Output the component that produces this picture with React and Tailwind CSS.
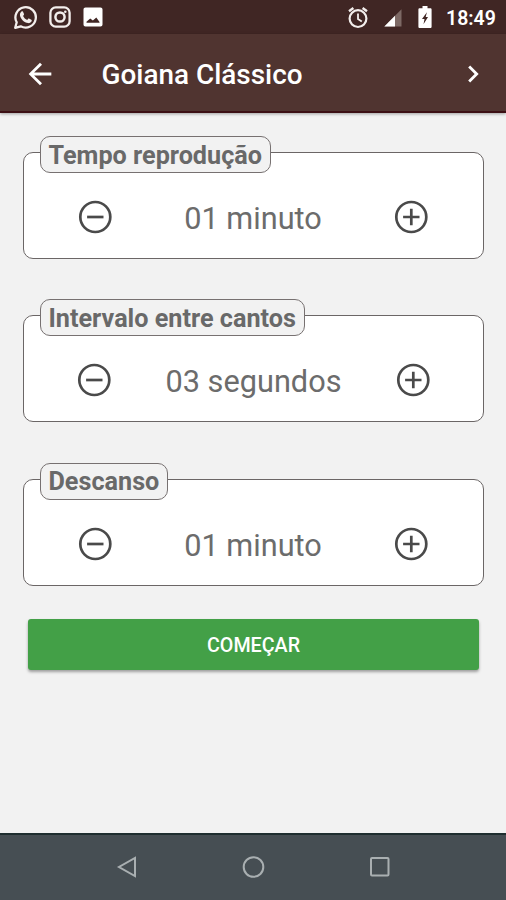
import React from "react";
import { MdArrowBack, MdChevronRight } from "react-icons/md";

function WhatsappGlyph() {
  return (
    <svg width="25" height="25" viewBox="0 0 25 25" fill="none" className="shrink-0">
      <path
        d="M2.200 22.800L3.700 17.300A10.200 10.200 0 1 1 7.700 21.300z"
        stroke="#f3eeec"
        strokeWidth="2.300"
        strokeLinejoin="round"
      />
      <path
        d="M8.300 6.700c.5-.5 1.400-.5 1.700.1l1 2.300c.2.500-.1.900-.9 1.800.9 1.900 2.200 3.100 4.200 4 .8-1 1.200-1.500 1.700-1.300l2.300 1.100c.6.300.6.900.3 1.600-.6 1.300-2 2-3.500 1.800-4-.7-7.500-4.100-8.100-7.700-.2-1.500.3-2.900 1.300-3.700z"
        fill="#f3eeec"
      />
    </svg>
  );
}

function InstagramGlyph() {
  return (
    <svg width="22" height="22" viewBox="0 0 22 22" fill="none" stroke="#f3eeec" strokeWidth="2.300">
      <rect x="1.400" y="1.400" width="19.200" height="19.200" rx="5.400" />
      <circle cx="11" cy="11" r="4.600" strokeWidth="2.500" />
      <circle cx="16.300" cy="5.700" r="1.300" fill="#f3eeec" stroke="none" />
    </svg>
  );
}

function PictureGlyph() {
  return (
    <svg width="20" height="20" viewBox="0 0 20 20">
      <path
        fillRule="evenodd"
        fill="#ffffff"
        d="M2.500.5h15c1.200 0 2 .8 2 2v15c0 1.200-.8 2-2 2h-15c-1.200 0-2-.8-2-2v-15c0-1.200.8-2 2-2zM3.500 15.800h13V15l-3.200-4.600-3.400 3-2.700-1.900-3.700 3.300z"
      />
    </svg>
  );
}

function AlarmGlyph() {
  return (
    <svg width="22" height="23" viewBox="0 0 22 23" fill="none" stroke="#f3eeec" className="shrink-0">
      <circle cx="11" cy="12.600" r="8.400" strokeWidth="2.200" />
      <path d="M11 7.600v5.300l3.800 2.500" strokeWidth="1.800" />
      <path d="M2 5.200L6.400 2M20 5.200L15.600 2" strokeWidth="2.400" />
    </svg>
  );
}

function SignalGlyph() {
  return (
    <svg width="18" height="18" viewBox="0 0 18 18">
      <path d="M17.500 .3V17.500H.3z" fill="#7d6965" />
      <path d="M11 6.800V17.500H.3z" fill="#ffffff" />
    </svg>
  );
}

function BatteryGlyph() {
  return (
    <svg width="14" height="22" viewBox="0 0 14 22">
      <path
        fillRule="evenodd"
        fill="#ffffff"
        d="M4.500 0h5v2.200h2.800c.8 0 1.300.5 1.300 1.300v17.200c0 .8-.5 1.300-1.300 1.300H1.700c-.8 0-1.300-.5-1.300-1.300V3.500c0-.8.5-1.300 1.300-1.300h2.800zM8.900 6.200L4 13h2.500l-1 5.200L10 11H7.700z"
      />
    </svg>
  );
}

function StatusBar() {
  return (
    <div className="flex h-[34px] items-center bg-[#402624] text-white">
      <div className="ml-[13px]"><WhatsappGlyph /></div>
      <div className="ml-[11px]"><InstagramGlyph /></div>
      <div className="ml-3"><PictureGlyph /></div>
      <div className="ml-auto"><AlarmGlyph /></div>
      <div className="ml-[15px] pt-[2px]"><SignalGlyph /></div>
      <div className="ml-4"><BatteryGlyph /></div>
      <span className="ml-[14px] w-[60px] pt-[3px] text-[19.500px] leading-none font-semibold">18:49</span>
    </div>
  );
}

function Header() {
  return (
    <header className="flex h-[79px] items-center border-b-2 border-[#3c1014] bg-[#503430] text-white shadow-[0_1px_3px_rgba(0,0,0,0.35)]">
      <MdArrowBack size={34} className="mt-[3px] ml-[23px]" />
      <h1 className="ml-[44.500px] pt-[5px] text-[27.900px] leading-none font-medium whitespace-nowrap">Goiana Clássico</h1>
      <MdChevronRight size={34} className="mt-[2px] mr-4 ml-auto" />
    </header>
  );
}

function RoundButtonIcon({ plus }) {
  return (
    <svg width="40" height="40" viewBox="0 0 40 40" fill="none" stroke="#4a4a4a" strokeWidth="2.700" className="shrink-0">
      <circle cx="20.300" cy="20" r="15" />
      <path d={plus ? "M12.100 20h16.400M20.300 11.800v16.400" : "M12.100 20h16.400"} />
    </svg>
  );
}

function Setting({ label, value, row }) {
  return (
    <section className="relative h-[107px] rounded-[10px] border border-[#6b6666] bg-white">
      <h2 className="absolute -top-[17px] left-[15.500px] flex h-[37px] items-center rounded-[10px] border border-[#777171] bg-[#f2f2f2] px-2 pt-[2px] text-[25.200px] leading-none font-bold whitespace-nowrap text-[#696969]">
        {label}
      </h2>
      <div className={"flex h-full items-center justify-between pt-[23px] " + row}>
        <RoundButtonIcon />
        <span className="pt-[5px] text-[30.700px] leading-none whitespace-nowrap text-[#6c6c6c]">{value}</span>
        <RoundButtonIcon plus />
      </div>
    </section>
  );
}

function NavBar() {
  return (
    <nav className="flex h-[67px] items-center justify-center gap-[103px] border-t-2 border-[#1f2e30] bg-[#464e53] pb-[2px]">
      <svg width="24" height="24" viewBox="0 0 24 24" fill="none" stroke="#a9afb1" strokeWidth="2">
        <path d="M21 3v18L5 12z" />
      </svg>
      <svg width="24" height="24" viewBox="0 0 24 24" fill="none" stroke="#a9afb1" strokeWidth="2">
        <circle cx="12.500" cy="12" r="9.800" />
      </svg>
      <svg width="24" height="24" viewBox="0 0 24 24" fill="none" stroke="#a9afb1" strokeWidth="2">
        <rect x="3" y="3" width="17.500" height="17.500" rx="1" />
      </svg>
    </nav>
  );
}

export default function App() {
  return (
    <div className="flex h-[900px] w-[506px] flex-col overflow-hidden bg-[#f2f2f2] font-[Roboto,sans-serif]">
      <StatusBar />
      <Header />
      <main className="flex flex-1 flex-col pr-[22px] pl-[23px] pt-[39px]">
        <div className="flex flex-col gap-[56.300px]">
          <Setting label="Tempo reprodução" value="01 minuto" row="pr-[52px] pl-[51px]" />
          <Setting label="Intervalo entre cantos" value="03 segundos" row="px-[50px]" />
          <Setting label="Descanso" value="01 minuto" row="pr-[52px] pl-[51px]" />
        </div>
        <button className="mx-[5px] mt-[33.400px] h-[51px] rounded-[3px] bg-[#43a047] pt-[3px] text-[19.700px] font-medium text-white shadow-[0_2px_3px_rgba(0,0,0,0.35)]">
          COMEÇAR
        </button>
      </main>
      <NavBar />
    </div>
  );
}
